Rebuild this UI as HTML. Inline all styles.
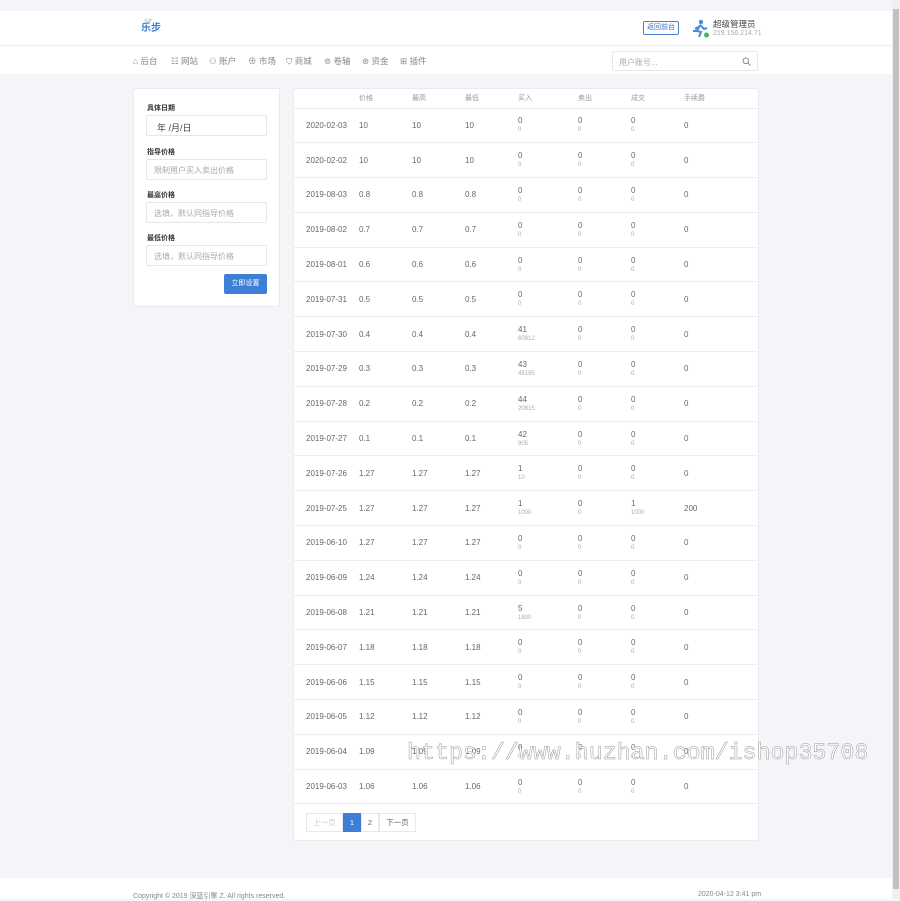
<!DOCTYPE html>
<html><head><meta charset="utf-8">
<style>
*{margin:0;padding:0;box-sizing:border-box}
body{width:900px;height:899px;overflow:hidden;background:#f4f5f9;font-family:"Liberation Sans","Noto Sans CJK SC",sans-serif;font-size:8px;color:#666;position:relative}
.top{position:absolute;left:0;top:11px;width:892px;height:35px;background:#fff;border-bottom:1px solid #eceef2}
.nav{position:absolute;left:0;top:46px;width:892px;height:28px;background:#fff}
.nav span{position:absolute;top:9px;font-size:8.5px;color:#888}
.logo{position:absolute;left:141px;top:23px;color:#3f7fd0;font-weight:bold;font-size:10px;line-height:12px}
.logo small{position:absolute;left:3px;top:-4px;font-size:4px;color:#6aa;font-weight:normal;line-height:4px}
.btnf{position:absolute;left:643px;top:21px;width:36px;height:14px;border:1px solid #4a80d0;border-radius:2px;color:#3f6fc0;font-size:7px;text-align:center;line-height:12px}
.admin{position:absolute;left:713px;top:19px;font-size:8.5px;color:#444;line-height:10px;white-space:nowrap}
.ip{position:absolute;left:713px;top:30px;font-size:7px;color:#aaa;line-height:8px;white-space:nowrap}
.search{position:absolute;left:612px;top:51px;width:146px;height:20px;border:1px solid #e6e8ec;border-radius:2px;background:#fff;font-size:8px;color:#aaa;padding:5px 6px}
.card{position:absolute;background:#fff;border:1px solid #e8eaee;border-radius:2px}
.lbl{position:absolute;left:147px;font-size:7px;font-weight:bold;color:#333}
.inp{position:absolute;left:146px;width:121px;height:21px;border:1px solid #e4e6ea;border-radius:2px;font-size:8px;color:#aaa;padding:5px 7px}
.sbtn{position:absolute;left:224px;top:274px;width:43px;height:20px;background:#3d7fd6;color:#fff;border-radius:2px;font-size:7px;text-align:center;line-height:20px}
table{position:absolute;left:294px;top:89px;border-collapse:collapse;width:463px}
th{height:19px;font-weight:normal;font-size:7px;color:#999;text-align:left;border-bottom:1px solid #eceef2}
td{height:34.8px;border-bottom:1px solid #eceef2;text-align:left;vertical-align:middle;font-size:8px;color:#666;line-height:11px}
td small{display:block;font-size:6px;color:#aaa;line-height:9px}
td.b{color:#5a6a8a}
.c1{width:65px;padding-left:12px}.c2,.c3,.c4,.c6,.c7{width:53px}.c5{width:60px}
.pg{position:absolute;top:813px;height:19px;border:1px solid #e6e8ec;font-size:7.5px;line-height:17px;text-align:center;background:#fff;color:#666}
.foot{position:absolute;left:0;top:878px;width:892px;height:21px;background:#fff}
.foot span{position:absolute;top:13px;font-size:7px;color:#888}
.sb{position:absolute;left:892px;top:0;width:8px;height:899px;background:#f0f0f0}
.sb div{position:absolute;left:1px;top:9px;width:6px;height:880px;background:#c1c1c1}
.wm{position:absolute;left:407px;top:740px;font-family:"Liberation Mono",monospace;font-size:23.3px;color:#fff;-webkit-text-stroke:0.5px #999;white-space:nowrap}
</style></head><body>
<div class="top"></div>
<div class="logo"><small>乐步</small>乐步</div>
<div class="btnf">返回前台</div>
<svg style="position:absolute;left:692px;top:19px" width="18" height="20" viewBox="0 0 18 20"><circle cx="9" cy="3" r="2.2" fill="#4a8ad8"/><path d="M8 6 L5 12 L9 13 L7 18 M8 6 L12 10 L15 9 M6 8 L3 10 M1 12 L5 12" stroke="#4a8ad8" stroke-width="2" fill="none"/><circle cx="14.5" cy="16" r="2.5" fill="#3cbf4a"/></svg>
<div class="admin">超级管理员</div><div class="ip">219.156.214.71</div>
<div class="nav">
<span style="left:133px">⌂ 后台</span><span style="left:171px">☷ 网站</span><span style="left:209px">⚇ 账户</span><span style="left:248px">⊕ 市场</span><span style="left:286px">⛉ 商城</span><span style="left:324px">⊜ 卷轴</span><span style="left:362px">⊛ 资金</span><span style="left:400px">⊞ 插件</span>
</div>
<div class="search">用户账号...<svg style="position:absolute;right:6px;top:5px" width="9" height="9" viewBox="0 0 9 9"><circle cx="3.8" cy="3.8" r="2.8" stroke="#888" fill="none"/><path d="M6 6 L8.5 8.5" stroke="#888"/></svg></div>

<div class="card" style="left:133px;top:88px;width:147px;height:219px"></div>
<div class="lbl" style="top:103px">具体日期</div>
<div class="inp" style="top:115px;color:#444;font-size:9px;padding-left:10px">年 /月/日</div>
<div class="lbl" style="top:147px">指导价格</div>
<div class="inp" style="top:159px">限制用户买入卖出价格</div>
<div class="lbl" style="top:190px">最高价格</div>
<div class="inp" style="top:202px">选填，默认同指导价格</div>
<div class="lbl" style="top:233px">最低价格</div>
<div class="inp" style="top:245px">选填，默认同指导价格</div>
<div class="sbtn">立即设置</div>

<div class="card" style="left:293px;top:88px;width:466px;height:753px"></div>
<table>
<tr><th class="c1"></th><th class="c2">价格</th><th class="c3">最高</th><th class="c4">最低</th><th class="c5">买入</th><th class="c6">卖出</th><th class="c7">成交</th><th>手续费</th></tr>
<tr><td class="c1">2020-02-03</td><td>10</td><td>10</td><td>10</td><td>0<small>0</small></td><td class="b">0<small>0</small></td><td class="b">0<small>0</small></td><td>0</td></tr>
<tr><td class="c1">2020-02-02</td><td>10</td><td>10</td><td>10</td><td>0<small>0</small></td><td class="b">0<small>0</small></td><td class="b">0<small>0</small></td><td>0</td></tr>
<tr><td class="c1">2019-08-03</td><td>0.8</td><td>0.8</td><td>0.8</td><td>0<small>0</small></td><td class="b">0<small>0</small></td><td class="b">0<small>0</small></td><td>0</td></tr>
<tr><td class="c1">2019-08-02</td><td>0.7</td><td>0.7</td><td>0.7</td><td>0<small>0</small></td><td class="b">0<small>0</small></td><td class="b">0<small>0</small></td><td>0</td></tr>
<tr><td class="c1">2019-08-01</td><td>0.6</td><td>0.6</td><td>0.6</td><td>0<small>0</small></td><td class="b">0<small>0</small></td><td class="b">0<small>0</small></td><td>0</td></tr>
<tr><td class="c1">2019-07-31</td><td>0.5</td><td>0.5</td><td>0.5</td><td>0<small>0</small></td><td class="b">0<small>0</small></td><td class="b">0<small>0</small></td><td>0</td></tr>
<tr><td class="c1">2019-07-30</td><td>0.4</td><td>0.4</td><td>0.4</td><td>41<small>60912</small></td><td class="b">0<small>0</small></td><td class="b">0<small>0</small></td><td>0</td></tr>
<tr><td class="c1">2019-07-29</td><td>0.3</td><td>0.3</td><td>0.3</td><td>43<small>45195</small></td><td class="b">0<small>0</small></td><td class="b">0<small>0</small></td><td>0</td></tr>
<tr><td class="c1">2019-07-28</td><td>0.2</td><td>0.2</td><td>0.2</td><td>44<small>20815</small></td><td class="b">0<small>0</small></td><td class="b">0<small>0</small></td><td>0</td></tr>
<tr><td class="c1">2019-07-27</td><td>0.1</td><td>0.1</td><td>0.1</td><td>42<small>905</small></td><td class="b">0<small>0</small></td><td class="b">0<small>0</small></td><td>0</td></tr>
<tr><td class="c1">2019-07-26</td><td>1.27</td><td>1.27</td><td>1.27</td><td>1<small>10</small></td><td class="b">0<small>0</small></td><td class="b">0<small>0</small></td><td>0</td></tr>
<tr><td class="c1">2019-07-25</td><td>1.27</td><td>1.27</td><td>1.27</td><td>1<small>1000</small></td><td class="b">0<small>0</small></td><td class="b">1<small>1000</small></td><td>200</td></tr>
<tr><td class="c1">2019-06-10</td><td>1.27</td><td>1.27</td><td>1.27</td><td>0<small>0</small></td><td class="b">0<small>0</small></td><td class="b">0<small>0</small></td><td>0</td></tr>
<tr><td class="c1">2019-06-09</td><td>1.24</td><td>1.24</td><td>1.24</td><td>0<small>0</small></td><td class="b">0<small>0</small></td><td class="b">0<small>0</small></td><td>0</td></tr>
<tr><td class="c1">2019-06-08</td><td>1.21</td><td>1.21</td><td>1.21</td><td>5<small>1800</small></td><td class="b">0<small>0</small></td><td class="b">0<small>0</small></td><td>0</td></tr>
<tr><td class="c1">2019-06-07</td><td>1.18</td><td>1.18</td><td>1.18</td><td>0<small>0</small></td><td class="b">0<small>0</small></td><td class="b">0<small>0</small></td><td>0</td></tr>
<tr><td class="c1">2019-06-06</td><td>1.15</td><td>1.15</td><td>1.15</td><td>0<small>0</small></td><td class="b">0<small>0</small></td><td class="b">0<small>0</small></td><td>0</td></tr>
<tr><td class="c1">2019-06-05</td><td>1.12</td><td>1.12</td><td>1.12</td><td>0<small>0</small></td><td class="b">0<small>0</small></td><td class="b">0<small>0</small></td><td>0</td></tr>
<tr><td class="c1">2019-06-04</td><td>1.09</td><td>1.09</td><td>1.09</td><td>0<small>0</small></td><td class="b">0<small>0</small></td><td class="b">0<small>0</small></td><td>0</td></tr>
<tr><td class="c1">2019-06-03</td><td>1.06</td><td>1.06</td><td>1.06</td><td>0<small>0</small></td><td class="b">0<small>0</small></td><td class="b">0<small>0</small></td><td>0</td></tr>
</table>
<div class="pg" style="left:306px;width:37px;color:#ccc">上一页</div>
<div class="pg" style="left:343px;width:18px;background:#3d7fd6;border-color:#3d7fd6;color:#fff">1</div>
<div class="pg" style="left:361px;width:18px">2</div>
<div class="pg" style="left:379px;width:37px">下一页</div>
<div class="wm">https://www.huzhan.com/ishop35708</div>
<div class="foot"><span style="left:133px">Copyright © 2019 深蓝引擎 Z. All rights reserved.</span><span style="left:698px">2020-04-12 3:41 pm</span></div>
<div class="sb"><div></div></div>
</body></html>
